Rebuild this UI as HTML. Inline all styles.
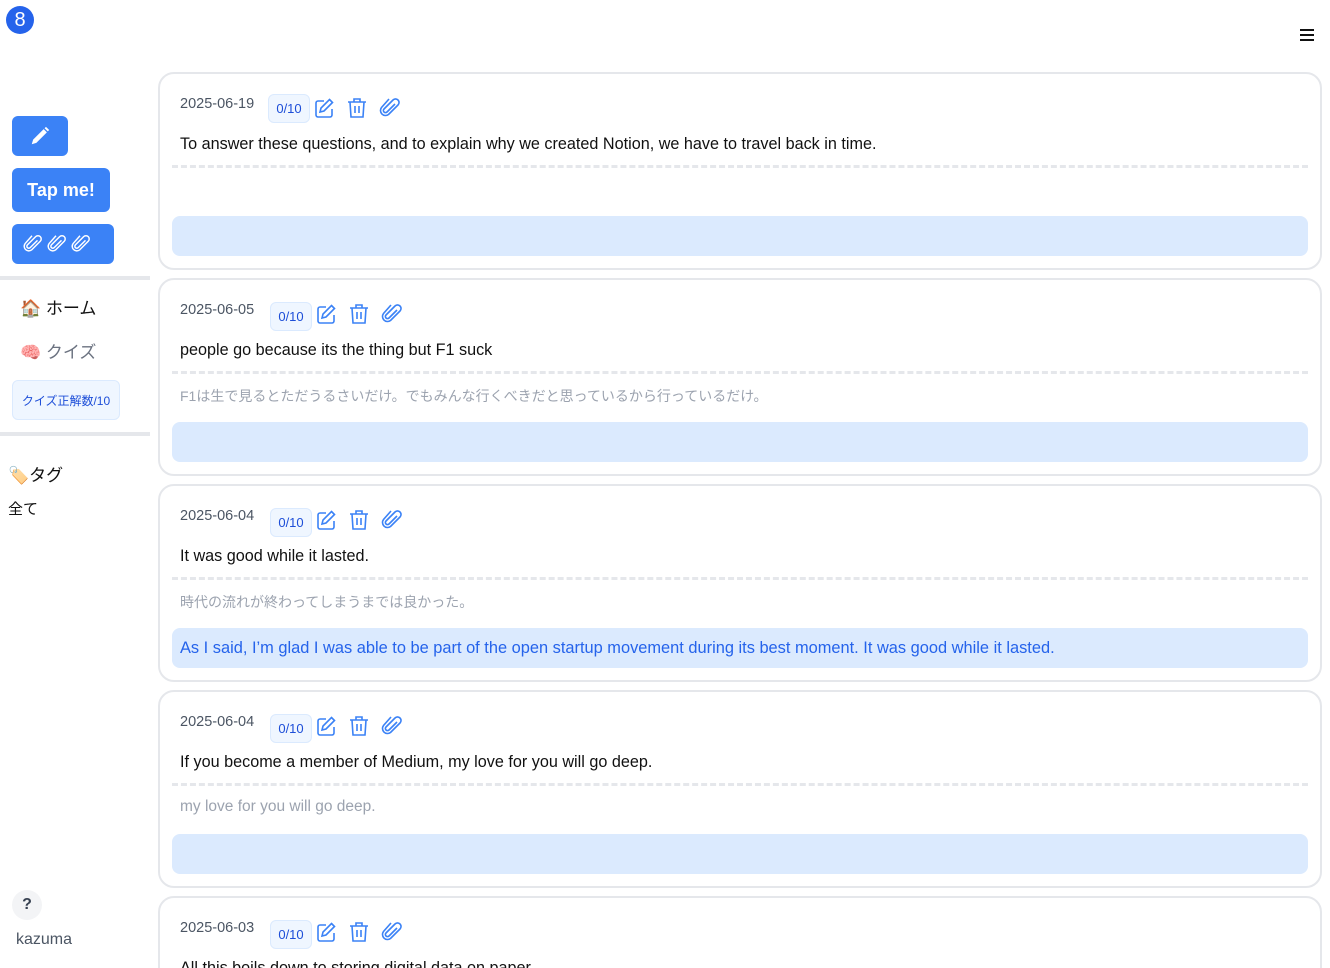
<!DOCTYPE html>
<html style="width:1330px;height:968px;overflow:hidden"><head><meta charset="utf-8"><style>
*{box-sizing:border-box;margin:0;padding:0}
body{width:1330px;height:968px;overflow:hidden;background:#fff;font-family:"Liberation Sans","Noto Sans CJK JP",sans-serif;position:relative;color:#111}
.abs{position:absolute}
.btn{position:absolute;left:12px;background:#3b82f6;border-radius:6px;color:#fff;display:flex;align-items:center;justify-content:center}
.sep{position:absolute;left:0;width:150px;height:4px;background:#e5e7eb}
.card{position:absolute;left:158px;width:1164px;height:198px;border:2px solid #e5e7eb;border-radius:16px;background:#fff}
.date{position:absolute;left:20px;top:22px;font-size:14.5px;color:#4b5563}
.badge{position:absolute;left:108px;top:20px;width:42px;height:29px;border:1px solid #dbeafe;background:#eff6ff;border-radius:6px;color:#1d4ed8;font-size:13px;display:flex;align-items:center;justify-content:center}
.ic{position:absolute;top:22px}
.t1{position:absolute;left:20px;top:61px;font-size:16.2px;color:#111}
.dash{position:absolute;left:12px;right:12px;top:91px;border-top:3px dashed #e5e7eb}
.t2{position:absolute;left:20px;top:106px;font-size:15.5px;color:#9ca3af}
.blue{position:absolute;left:12px;right:12px;top:142px;height:40px;background:#dbeafe;border-radius:8px;color:#2563eb;font-size:16.4px;padding:10px 8px}
</style></head><body>
<div class="abs" style="left:6px;top:6px;width:28px;height:28px;border-radius:50%;background:#2563eb;color:#fff;font-size:20px;display:flex;align-items:center;justify-content:center">8</div>
<div class="abs" style="left:1300px;top:29px;width:14px;height:2px;background:#111;box-shadow:0 5px 0 #111,0 10px 0 #111"></div>
<div class="btn" style="top:116px;width:56px;height:40px"><svg width="22" height="22" viewBox="0 0 24 24"><path d="M3 21l1.5-5L16 4.5l3.5 3.5L8 19.5z M17 3.5l1.5-1.5 3.5 3.5-1.5 1.5z" fill="#fff"/></svg></div>
<div class="btn" style="top:168px;width:98px;height:44px;font-weight:bold;font-size:18px">Tap me!</div>
<div class="btn" style="top:224px;width:102px;height:40px;justify-content:flex-start;padding-left:9px;gap:2px">
<svg width="22" height="22" viewBox="0 0 24 24" fill="none" stroke="#fff" stroke-width="1.6"><path d="M18 8l-8 8a2 2 0 0 1-3-3l9-9a3.5 3.5 0 0 1 5 5l-9.5 9.5a5 5 0 0 1-7-7L12 3"/></svg>
<svg width="22" height="22" viewBox="0 0 24 24" fill="none" stroke="#fff" stroke-width="1.6"><path d="M18 8l-8 8a2 2 0 0 1-3-3l9-9a3.5 3.5 0 0 1 5 5l-9.5 9.5a5 5 0 0 1-7-7L12 3"/></svg>
<svg width="22" height="22" viewBox="0 0 24 24" fill="none" stroke="#fff" stroke-width="1.6"><path d="M18 8l-8 8a2 2 0 0 1-3-3l9-9a3.5 3.5 0 0 1 5 5l-9.5 9.5a5 5 0 0 1-7-7L12 3"/></svg></div>
<div class="sep" style="top:276px"></div>
<div class="abs" style="left:20px;top:294px;font-size:17px">🏠 ホーム</div>
<div class="abs" style="left:20px;top:338px;font-size:17px;color:#6b7280">🧠 クイズ</div>
<div class="abs" style="left:12px;top:380px;width:108px;height:40px;border:1px solid #dbeafe;background:#eff6ff;border-radius:6px;color:#1d4ed8;font-size:12px;display:flex;align-items:center;justify-content:center">クイズ正解数/10</div>
<div class="sep" style="top:432px"></div>
<div class="abs" style="left:8px;top:461px;font-size:17px">🏷️タグ</div>
<div class="abs" style="left:8px;top:498px;font-size:15px">全て</div>
<div class="abs" style="left:12px;top:890px;width:30px;height:30px;border-radius:50%;background:#f3f4f6;color:#374151;font-weight:bold;font-size:16px;display:flex;align-items:center;justify-content:center">?</div>
<div class="abs" style="left:16px;top:931px;font-size:16px;color:#4b5563">kazuma</div>

<div class="card" style="top:72px"><div class="date">2025-06-19</div><div class="badge">0/10</div>
<svg class="ic" style="left:153px" width="24" height="24" viewBox="0 0 24 24" fill="none" stroke="#3b82f6" stroke-width="1.6"><path d="M16.5 3.5l3 3L11 15l-4 1 1-4z M19 13v6a2 2 0 0 1-2 2H5a2 2 0 0 1-2-2V7a2 2 0 0 1 2-2h6"/></svg>
<svg class="ic" style="left:185px" width="24" height="24" viewBox="0 0 24 24" fill="none" stroke="#3b82f6" stroke-width="1.6"><path d="M3 6h18 M9 6V3h6v3 M5 6l1 15h12l1-15 M10 10v7 M14 10v7"/></svg>
<svg class="ic" style="left:217px" width="24" height="24" viewBox="0 0 24 24" fill="none" stroke="#3b82f6" stroke-width="1.6"><path d="M18 8l-8 8a2 2 0 0 1-3-3l9-9a3.5 3.5 0 0 1 5 5l-9.5 9.5a5 5 0 0 1-7-7L12 3"/></svg>
<div class="t1">To answer these questions, and to explain why we created Notion, we have to travel back in time.</div><div class="dash"></div><div class="blue"></div></div>

<div class="card" style="top:278px"><div class="date">2025-06-05</div><div class="badge" style="left:110px;top:22px">0/10</div>
<svg class="ic" style="left:155px" width="24" height="24" viewBox="0 0 24 24" fill="none" stroke="#3b82f6" stroke-width="1.6"><path d="M16.5 3.5l3 3L11 15l-4 1 1-4z M19 13v6a2 2 0 0 1-2 2H5a2 2 0 0 1-2-2V7a2 2 0 0 1 2-2h6"/></svg>
<svg class="ic" style="left:187px" width="24" height="24" viewBox="0 0 24 24" fill="none" stroke="#3b82f6" stroke-width="1.6"><path d="M3 6h18 M9 6V3h6v3 M5 6l1 15h12l1-15 M10 10v7 M14 10v7"/></svg>
<svg class="ic" style="left:219px" width="24" height="24" viewBox="0 0 24 24" fill="none" stroke="#3b82f6" stroke-width="1.6"><path d="M18 8l-8 8a2 2 0 0 1-3-3l9-9a3.5 3.5 0 0 1 5 5l-9.5 9.5a5 5 0 0 1-7-7L12 3"/></svg>
<div class="t1">people go because its the thing but F1 suck</div><div class="dash"></div><div class="t2" style="font-size:14px">F1は生で見るとただうるさいだけ。でもみんな行くべきだと思っているから行っているだけ。</div><div class="blue"></div></div>

<div class="card" style="top:484px"><div class="date">2025-06-04</div><div class="badge" style="left:110px;top:22px">0/10</div>
<svg class="ic" style="left:155px" width="24" height="24" viewBox="0 0 24 24" fill="none" stroke="#3b82f6" stroke-width="1.6"><path d="M16.5 3.5l3 3L11 15l-4 1 1-4z M19 13v6a2 2 0 0 1-2 2H5a2 2 0 0 1-2-2V7a2 2 0 0 1 2-2h6"/></svg>
<svg class="ic" style="left:187px" width="24" height="24" viewBox="0 0 24 24" fill="none" stroke="#3b82f6" stroke-width="1.6"><path d="M3 6h18 M9 6V3h6v3 M5 6l1 15h12l1-15 M10 10v7 M14 10v7"/></svg>
<svg class="ic" style="left:219px" width="24" height="24" viewBox="0 0 24 24" fill="none" stroke="#3b82f6" stroke-width="1.6"><path d="M18 8l-8 8a2 2 0 0 1-3-3l9-9a3.5 3.5 0 0 1 5 5l-9.5 9.5a5 5 0 0 1-7-7L12 3"/></svg>
<div class="t1">It was good while it lasted.</div><div class="dash"></div><div class="t2" style="font-size:14px">時代の流れが終わってしまうまでは良かった。</div><div class="blue" style="padding-top:11px">As I said, I’m glad I was able to be part of the open startup movement during its best moment. It was good while it lasted.</div></div>

<div class="card" style="top:690px"><div class="date">2025-06-04</div><div class="badge" style="left:110px;top:22px">0/10</div>
<svg class="ic" style="left:155px" width="24" height="24" viewBox="0 0 24 24" fill="none" stroke="#3b82f6" stroke-width="1.6"><path d="M16.5 3.5l3 3L11 15l-4 1 1-4z M19 13v6a2 2 0 0 1-2 2H5a2 2 0 0 1-2-2V7a2 2 0 0 1 2-2h6"/></svg>
<svg class="ic" style="left:187px" width="24" height="24" viewBox="0 0 24 24" fill="none" stroke="#3b82f6" stroke-width="1.6"><path d="M3 6h18 M9 6V3h6v3 M5 6l1 15h12l1-15 M10 10v7 M14 10v7"/></svg>
<svg class="ic" style="left:219px" width="24" height="24" viewBox="0 0 24 24" fill="none" stroke="#3b82f6" stroke-width="1.6"><path d="M18 8l-8 8a2 2 0 0 1-3-3l9-9a3.5 3.5 0 0 1 5 5l-9.5 9.5a5 5 0 0 1-7-7L12 3"/></svg>
<div class="t1">If you become a member of Medium, my love for you will go deep.</div><div class="dash"></div><div class="t2">my love for you will go deep.</div><div class="blue"></div></div>

<div class="card" style="top:896px"><div class="date">2025-06-03</div><div class="badge" style="left:110px;top:22px">0/10</div>
<svg class="ic" style="left:155px" width="24" height="24" viewBox="0 0 24 24" fill="none" stroke="#3b82f6" stroke-width="1.6"><path d="M16.5 3.5l3 3L11 15l-4 1 1-4z M19 13v6a2 2 0 0 1-2 2H5a2 2 0 0 1-2-2V7a2 2 0 0 1 2-2h6"/></svg>
<svg class="ic" style="left:187px" width="24" height="24" viewBox="0 0 24 24" fill="none" stroke="#3b82f6" stroke-width="1.6"><path d="M3 6h18 M9 6V3h6v3 M5 6l1 15h12l1-15 M10 10v7 M14 10v7"/></svg>
<svg class="ic" style="left:219px" width="24" height="24" viewBox="0 0 24 24" fill="none" stroke="#3b82f6" stroke-width="1.6"><path d="M18 8l-8 8a2 2 0 0 1-3-3l9-9a3.5 3.5 0 0 1 5 5l-9.5 9.5a5 5 0 0 1-7-7L12 3"/></svg>
<div class="t1">All this boils down to storing digital data on paper.</div></div>
</body></html>
